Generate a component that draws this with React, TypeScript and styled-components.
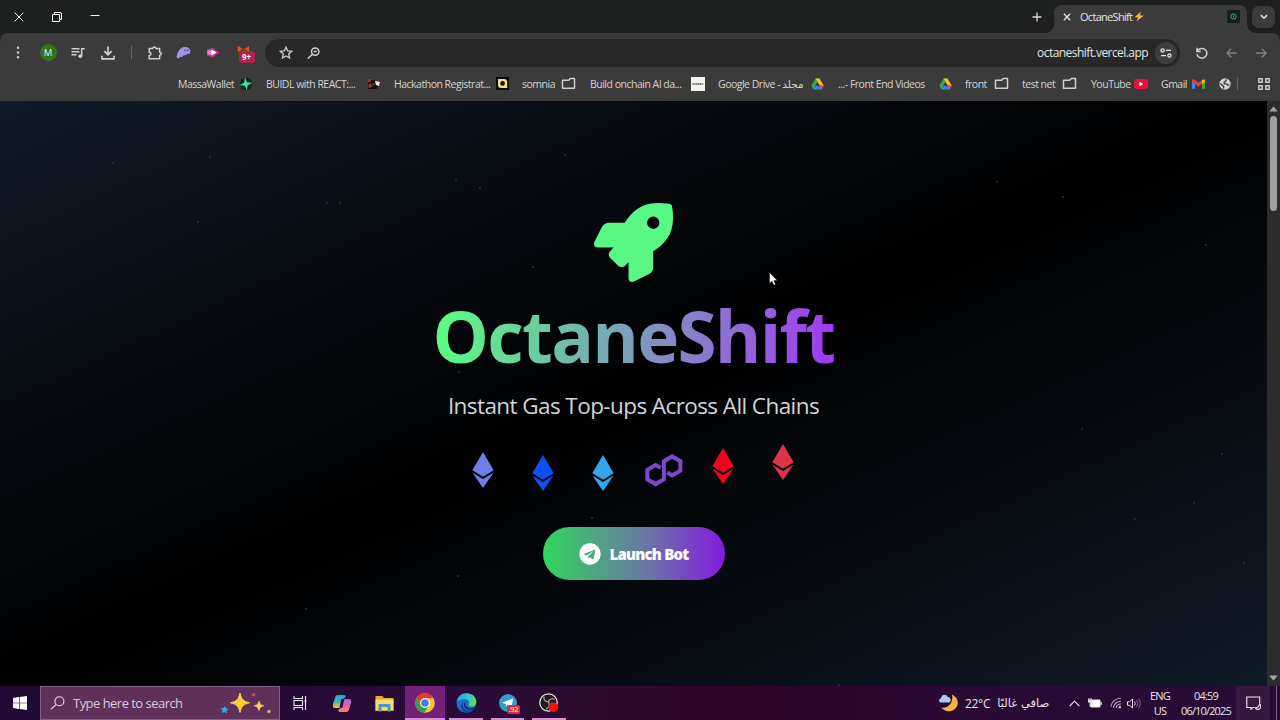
import React from "react";
import styled, { createGlobalStyle, css } from "styled-components";
import { FaRocket, FaEthereum, FaTelegram } from "react-icons/fa";

const GlobalStyle = createGlobalStyle`
  * { box-sizing: border-box; }
  body {
    margin: 0;
    overflow: hidden;
    background: #000;
    font-family: "Open Sans", "Noto Sans", "DejaVu Sans", sans-serif;
  }
  svg { display: block; flex: none; }
`;

const Screen = styled.div`
  width: 1280px;
  height: 720px;
  display: flex;
  flex-direction: column;
`;

/* ---------- Browser chrome ---------- */

const TabStrip = styled.div`
  height: 33px;
  flex: none;
  display: flex;
  align-items: center;
  background: #1d201f;
`;

const WindowButton = styled.div<{ $width: number }>`
  width: ${(p) => p.$width}px;
  display: flex;
  justify-content: center;
`;

const NewTab = styled.div`
  margin-left: auto;
  width: 34px;
  display: flex;
  justify-content: center;
`;

const Tab = styled.div`
  position: relative;
  align-self: flex-end;
  width: 193px;
  height: 28px;
  padding: 0 7px 5px 9px;
  display: flex;
  align-items: center;
  border-radius: 8px 8px 0 0;
  background: #3b3b3b;

  &::before,
  &::after {
    content: "";
    position: absolute;
    bottom: 0;
    width: 8px;
    height: 8px;
  }
  &::before {
    left: -8px;
    background: radial-gradient(circle at 0 0, transparent 7.5px, #3b3b3b 8px);
  }
  &::after {
    right: -8px;
    background: radial-gradient(circle at 100% 0, transparent 7.5px, #3b3b3b 8px);
  }
`;

const TabTitle = styled.span`
  margin-left: 9px;
  font-size: 11px;
  letter-spacing: -0.7px;
  color: #e6e6e6;
  display: flex;
  align-items: center;
  gap: 2px;
`;

const Favicon = styled.div`
  margin-left: auto;
  width: 13px;
  height: 13px;
  display: flex;
  align-items: center;
  justify-content: center;
  background: #14201d;
`;

const TabSearch = styled.div`
  width: 23px;
  height: 22px;
  margin: 0 5px;
  display: flex;
  align-items: center;
  justify-content: center;
  border-radius: 7px;
  background: #3b3b3b;
`;

const Toolbar = styled.div`
  height: 39px;
  flex: none;
  display: flex;
  align-items: center;
  background: #3b3b3b;
  border-radius: 8px 8px 0 0;
`;

const ToolbarBack = styled.div`
  flex: none;
  background: #1d201f;
`;

const ToolCell = styled.div<{ $width: number }>`
  width: ${(p) => p.$width}px;
  flex: none;
  display: flex;
  align-items: center;
  justify-content: center;
`;

const Avatar = styled.div`
  width: 17px;
  height: 17px;
  border-radius: 50%;
  background: #33741c;
  color: #e8f0e4;
  font-size: 9.5px;
  line-height: 17px;
  text-align: center;
`;

const Divider = styled.div`
  width: 1px;
  height: 13px;
  background: #666;
`;

const FoxCell = styled.div`
  position: relative;
  width: 18px;
  height: 18px;
`;

const CountBadge = styled.span`
  position: absolute;
  left: 3px;
  top: 7px;
  width: 16px;
  height: 12px;
  border-radius: 3px;
  background: #b3224f;
  color: #fff;
  font-size: 8px;
  font-weight: 700;
  line-height: 12px;
  text-align: center;
`;

const AddressBar = styled.div`
  width: 915px;
  height: 28px;
  flex: none;
  display: flex;
  align-items: center;
  padding: 0 3px 0 14px;
  border-radius: 14px;
  background: #282828;
`;

const Url = styled.span`
  margin-left: auto;
  margin-right: 7px;
  font-size: 12px;
  letter-spacing: -0.56px;
  color: #e4e4e4;
`;

const SiteInfo = styled.div`
  width: 22px;
  height: 22px;
  border-radius: 50%;
  display: flex;
  align-items: center;
  justify-content: center;
  background: #3d3d3d;
`;

const Bookmarks = styled.div`
  height: 29px;
  flex: none;
  display: flex;
  align-items: center;
  gap: 12px;
  padding: 0 0 6px 178px;
  background: #3b3b3b;
`;

const Bookmark = styled.div<{ $width: number; $inset?: number }>`
  width: ${(p) => p.$width}px;
  padding-right: ${(p) => p.$inset ?? 0}px;
  flex: none;
  display: flex;
  align-items: center;
  justify-content: space-between;
`;

const BookmarkText = styled.span`
  font-size: 10.5px;
  line-height: 16px;
  letter-spacing: -0.5px;
  white-space: pre;
  color: #d4d4d4;
`;

const BookmarkIcon = styled.div`
  width: 16px;
  display: flex;
  justify-content: center;
`;

const BookmarkTail = styled.div`
  display: flex;
  align-items: center;
`;

/* ---------- Page ---------- */

const Viewport = styled.div`
  flex: 1;
  display: flex;
  min-height: 0;
`;

const Hero = styled.main`
  position: relative;
  flex: 1;
  display: flex;
  flex-direction: column;
  align-items: center;
  padding-top: 102px;
  background: linear-gradient(to bottom right, #111a27 0%, #000 50%, #111a27 100%);
`;

const Rocket = styled(FaRocket)`
  margin-right: 1px;
  font-size: 79px;
  color: #59f884;
`;

const Title = styled.h1`
  margin: 17px 0 0;
  font-size: 71px;
  font-weight: 700;
  line-height: 73px;
  letter-spacing: -1.75px;
  background: linear-gradient(97deg, #5bf885 4%, #a03cf2 98%);
  -webkit-background-clip: text;
  background-clip: text;
  color: transparent;
`;

const Tagline = styled.p`
  margin: 18px 0 0;
  font-size: 22.5px;
  line-height: 32px;
  letter-spacing: -0.58px;
  color: #d1d5db;
`;

const Chains = styled.div`
  display: flex;
  gap: 24px;
  margin: 30px 1px 0 0;
`;

const Chain = styled.div<{ $color: string; $lift: number }>`
  width: 36px;
  height: 36px;
  font-size: 36px;
  color: ${(p) => p.$color};
  transform: translateY(${(p) => -p.$lift}px);
`;

const LaunchButton = styled.button`
  width: 182px;
  height: 53px;
  margin-top: 39px;
  padding: 0;
  display: flex;
  align-items: center;
  justify-content: center;
  gap: 9px;
  border: 0;
  border-radius: 27px;
  background: linear-gradient(to right, #30d65c, #6c74a8 58%, #841bdd);
  color: #fff;
  font-family: inherit;
  font-size: 15px;
  font-weight: 800;
  letter-spacing: -0.8px;
`;

const Particle = styled.i<{ $x: number; $y: number }>`
  position: absolute;
  left: ${(p) => p.$x}px;
  top: ${(p) => p.$y}px;
  width: 2px;
  height: 2px;
  border-radius: 50%;
  background: #2b3238;
`;

const Cursor = styled.div`
  position: absolute;
  left: 769px;
  top: 171px;
`;

const Scrollbar = styled.div`
  width: 13px;
  display: flex;
  flex-direction: column;
  align-items: center;
  padding: 5px 0;
  background: #2c2c2c;
`;

const Thumb = styled.div`
  width: 7px;
  height: 95px;
  margin: 4px 0 auto;
  border-radius: 4px;
  background: #9f9f9f;
`;

/* ---------- Taskbar ---------- */

const Taskbar = styled.div`
  height: 34px;
  flex: none;
  display: flex;
  background: linear-gradient(to right, #200a34 0, #2a0b38 35%, #2d0a2c 48%, #2c0529 58%, #2a0a35 78%, #280b35 100%);
`;

const StartButton = styled.div`
  width: 40px;
  display: flex;
  align-items: center;
  justify-content: center;
`;

const SearchBox = styled.div`
  width: 240px;
  display: flex;
  align-items: center;
  padding: 0 7px 0 9px;
  border: 1px solid #85608a;
  background: #5e305a;
  color: #dccada;
  font-size: 13px;
  letter-spacing: -0.53px;

  span {
    margin: 0 auto 0 8px;
  }
`;

const TaskItem = styled.div<{ $width: number; $active?: boolean; $open?: boolean }>`
  position: relative;
  width: ${(p) => p.$width}px;
  display: flex;
  align-items: center;
  justify-content: center;
  ${(p) => p.$active && css`background: #74207a;`}
  ${(p) =>
    p.$open &&
    css`
      &::after {
        content: "";
        position: absolute;
        left: ${p.$active ? 0 : 4}px;
        right: ${p.$active ? 0 : 4}px;
        bottom: 0;
        height: 2px;
        background: #d98fd6;
      }
    `}
`;

const UnreadBadge = styled.span`
  position: absolute;
  left: 20px;
  top: 19px;
  width: 13px;
  height: 9px;
  border-radius: 2px;
  background: #d3303c;
  color: #fff;
  font-size: 7.5px;
  line-height: 9px;
  letter-spacing: -0.3px;
  text-align: center;
`;

const Tray = styled.div`
  margin-left: auto;
  display: flex;
  align-items: center;
  color: #e9e2ec;
  font-size: 12px;
`;

const Weather = styled.div`
  display: flex;
  align-items: center;
  width: 129px;
  white-space: nowrap;
`;

const Temperature = styled.span`
  margin: 0 7px 0 6px;
  letter-spacing: -0.3px;
`;

const Condition = styled.span`
  font-family: "DejaVu Sans", sans-serif;
  font-size: 11.5px;
`;

const Stack = styled.div<{ $width: number; $tracking: number }>`
  width: ${(p) => p.$width}px;
  font-size: 11px;
  line-height: 15px;
  letter-spacing: ${(p) => p.$tracking}px;
  text-align: center;
`;

const Notifications = styled.div`
  width: 34px;
  height: 34px;
  margin-right: 6px;
  display: flex;
  align-items: center;
  justify-content: center;
  background: #391840;
`;

const ShowDesktop = styled.div`
  width: 4px;
  height: 34px;
  border-left: 1px solid #7c6480;
`;

/* ---------- Icons ---------- */

const line = { fill: "none", stroke: "#d0d0d0", strokeWidth: 1.5 };

const FolderIcon = () => (
  <svg width="15" height="13" viewBox="0 0 15 13" {...line}>
    <path d="M1.5 3.2h6.2l1.6-1.7h4.2v9.7h-12z" strokeLinejoin="round" />
  </svg>
);

const DriveIcon = () => (
  <svg width="13" height="12" viewBox="0 0 13 12">
    <path d="M4.5 0.5h4L4.4 7.3 2.2 11 0.2 7.8z" fill="#2fa84f" />
    <path d="M4.5 0.5h4l4.3 7.3H8.8z" fill="#f7bf2a" />
    <path d="M4.2 7.8h8.6L10.8 11.4H2.2z" fill="#3f7ee8" />
    <path d="M8.8 7.8h4l-2 3.6z" fill="#e24a3b" />
  </svg>
);

const MassaIcon = () => (
  <svg width="14" height="14" viewBox="0 0 14 14">
    <circle cx="7" cy="7" r="6.3" fill="#10241f" />
    <path d="M6 0.5l2 4.8 5.5 0.6-4.8 2.3-0.8 5.3-2-4.8L0.5 8l4.7-2.2z" fill="#3ee89a" />
  </svg>
);

const BuidlIcon = () => (
  <svg width="14" height="12" viewBox="0 0 14 12">
    <path d="M1 2h7l1 5-2 4H1z" fill="#170f10" />
    <path d="M1 1h3v3H1zM1 7l3-2 1 4-3 1z" fill="#8e3a34" />
    <path d="M5 5h3v3H5z" fill="#4a2524" />
    <path d="M8 3l5 1-1 4-3-1z" fill="#eee9e2" />
    <path d="M8 7l3 1-1 3H7z" fill="#111" />
  </svg>
);

const HackathonIcon = () => (
  <svg width="13" height="13" viewBox="0 0 13 13">
    <path d="M0 0h13v13H0z" fill="#0b0a06" />
    <path d="M2 2h6.5a3 3 0 0 1 2.7 3v6H5a3 3 0 0 1-3-3z" fill="#f0e37c" />
    <circle cx="6.6" cy="6.4" r="2.3" fill="#0b0a06" />
  </svg>
);

const OnchainIcon = () => (
  <svg width="14" height="14" viewBox="0 0 14 14">
    <path d="M0 0h14v14H0z" fill="#f2f2ee" />
    <path d="M1.5 7h11" stroke="#4a4a4a" strokeWidth="1.6" strokeDasharray="1.3 0.5" />
  </svg>
);

const YouTubeIcon = () => (
  <svg width="14" height="10" viewBox="0 0 14 10">
    <rect width="14" height="10" rx="2.4" fill="#e8123c" />
    <path d="M5.5 2.8v4.4L9.2 5z" fill="#fff" />
  </svg>
);

const GmailIcon = () => (
  <svg width="13" height="10" viewBox="0 0 13 10">
    <path d="M0 1.5v8.3h3V4z" fill="#4285f4" />
    <path d="M13 1.5v8.3h-3V4z" fill="#34a853" />
    <path d="M0 1.5C0 0 1.6 0 2.6 0.7L6.5 3.8 10.4 0.7v3.8L6.5 7.6 2.8 4.7 0 2.9z" fill="#e94235" />
    <path d="M10 1c1-1 3-0.8 3 0.7v1.4L10 5z" fill="#fbbc04" />
  </svg>
);

const GlobeIcon = () => (
  <svg width="12" height="12" viewBox="0 0 12 12">
    <circle cx="6" cy="6" r="5.7" fill="#d4d4d4" />
    <path d="M7 1.2v1.6L5.2 4v1.8h2.4l1 1.3h2M1.2 5.4l3.4 3v2.3" fill="none" stroke="#3b3b3b" strokeWidth="1.3" />
  </svg>
);

const GridIcon = () => (
  <svg width="12" height="12" viewBox="0 0 12 12" {...line} strokeWidth="1.4">
    <path d="M0.8 0.8h3.4v3.4H0.8zM7.8 0.8h3.4v3.4H7.8zM0.8 7.8h3.4v3.4H0.8zM7.8 7.8h3.4v3.4H7.8z" />
  </svg>
);

const PolygonIcon = () => (
  <svg width="38" height="34" viewBox="0 0 38 34">
    <path
      d="M15.6 13.8L10.6 11 2.3 15.9v9.4l8.3 4.8 8.3-4.8V7.2l8.2-4.8 8.3 4.8v9.4l-8.3 4.8-4.8-2.8"
      fill="none"
      stroke="#7c48d0"
      strokeWidth="4"
    />
  </svg>
);

const bookmarks: {
  label: string;
  width: number;
  icon: React.ReactNode;
  inset?: number;
}[] = [
  { label: "MassaWallet", width: 76, icon: <MassaIcon /> },
  { label: "BUIDL with REACT:...", width: 116, icon: <BuidlIcon /> },
  { label: "Hackathon Registrat...", width: 116, icon: <HackathonIcon /> },
  { label: "somnia", width: 56, icon: <FolderIcon />, inset: 2 },
  { label: "Build onchain AI da...", width: 116, icon: <OnchainIcon /> },
  { label: "Google Drive - مجلد", width: 108, icon: <DriveIcon />, inset: 1 },
  { label: "...- Front End Videos", width: 115, icon: <DriveIcon /> },
  { label: "front", width: 45, icon: <FolderIcon />, inset: 1 },
  { label: "test net", width: 57, icon: <FolderIcon />, inset: 2 },
  { label: "YouTube", width: 58, icon: <YouTubeIcon /> },
  { label: "Gmail", width: 45, icon: <GmailIcon /> },
];

const chains = [
  { color: "#6c7fe6", lift: 0 },
  { color: "#0d4ff5", lift: -3 },
  { color: "#35a6ee", lift: -3 },
  { color: "#7c48d0", lift: -2, polygon: true },
  { color: "#f5001f", lift: 4 },
  { color: "#db3546", lift: 8 },
];

const particles = [
  [112, 61], [209, 55], [197, 120], [326, 101], [339, 101], [455, 78], [479, 86],
  [564, 53], [532, 165], [458, 270], [591, 416], [457, 474], [305, 507], [996, 80],
  [1062, 95], [1205, 143], [1081, 327], [1221, 352], [1193, 401], [1134, 417], [1243, 461],
  [838, 583],
];

const Browser: React.FunctionComponent = () => (
  <>
    <TabStrip>
      <WindowButton $width={38}>
        <svg width="10" height="10" viewBox="0 0 10 10" stroke="#fff">
          <path d="M0.7 0.7l8.6 8.6M9.3 0.7L0.7 9.3" />
        </svg>
      </WindowButton>
      <WindowButton $width={37}>
        <svg width="10" height="10" viewBox="0 0 10 10" fill="none" stroke="#fff">
          <path d="M0.5 2.5h7v7h-7zM2.5 2V0.5h5.5q1.5 0 1.5 1.5v5.5H8" />
        </svg>
      </WindowButton>
      <WindowButton $width={40}>
        <svg width="10" height="10" viewBox="0 0 10 10" stroke="#fff">
          <path d="M0.5 3.5h9" />
        </svg>
      </WindowButton>
      <NewTab>
        <svg width="10" height="10" viewBox="0 0 10 10" stroke="#dcdcdc" strokeWidth="1.3">
          <path d="M5 0.5v9M0.5 5h9" />
        </svg>
      </NewTab>
      <Tab>
        <svg width="8" height="8" viewBox="0 0 8 8" stroke="#e6e6e6" strokeWidth="1.4">
          <path d="M0.8 0.8l6.4 6.4M7.2 0.8L0.8 7.2" />
        </svg>
        <TabTitle>
          OctaneShift
          <svg width="10" height="11" viewBox="0 0 10 11">
            <path d="M7 0.5L0.5 6.2l3.7 0.4L2.4 10.6 9.6 4.7 5.8 4.2z" fill="#f8b82e" />
          </svg>
        </TabTitle>
        <Favicon>
          <svg width="7" height="7" viewBox="0 0 7 7" fill="none" stroke="#5f9f8c">
            <circle cx="3.5" cy="3.5" r="2.6" />
            <path d="M3.5 2.4v2" />
          </svg>
        </Favicon>
      </Tab>
      <TabSearch>
        <svg width="8" height="6" viewBox="0 0 8 6" fill="none" stroke="#eee" strokeWidth="1.6">
          <path d="M1 1.2l3 3 3-3" />
        </svg>
      </TabSearch>
    </TabStrip>

    <ToolbarBack>
      <Toolbar>
        <ToolCell $width={36}>
          <svg width="4" height="13" viewBox="0 0 4 13" fill="#cfcfcf">
            <circle cx="2" cy="1.8" r="1.25" />
            <circle cx="2" cy="6.5" r="1.25" />
            <circle cx="2" cy="11.2" r="1.25" />
          </svg>
        </ToolCell>
        <ToolCell $width={24}>
          <Avatar>M</Avatar>
        </ToolCell>
        <ToolCell $width={36}>
          <svg width="14" height="12" viewBox="0 0 14 12" {...line}>
            <path d="M0.5 1.7h8M0.5 4.7h8M0.5 7.7h5M10.7 9V1.7h3" />
            <circle cx="9.3" cy="9.2" r="1.5" fill="#d0d0d0" strokeWidth="1" />
          </svg>
        </ToolCell>
        <ToolCell $width={24}>
          <svg width="14" height="14" viewBox="0 0 14 14" {...line} strokeWidth="1.7">
            <path d="M7 0.5v8M3.3 5.2L7 8.9l3.7-3.7M1 9.8v3h12v-3" />
          </svg>
        </ToolCell>
        <ToolCell $width={22}>
          <Divider />
        </ToolCell>
        <ToolCell $width={25}>
          <svg width="14" height="14" viewBox="0 0 14 14" {...line}>
            <path
              d="M1.2 2.6h3.6c0-2.2 3-2.2 3 0h3.8v3.6c2.2 0 2.2 3 0 3v3.6H1.2V9.4c2.4 0 2.4-3.2 0-3.2z"
              strokeLinejoin="round"
            />
          </svg>
        </ToolCell>
        <ToolCell $width={33}>
          <svg width="15" height="13" viewBox="0 0 15 13">
            <path
              d="M0.5 11C1.5 5.5 4.5 1 9 1c4 0 6 2.6 5.2 5.5-0.5 2-2.4 1.8-3 1-0.8 2-2.6 2.2-3.4 1.4C6.8 11 5.4 11.4 4.4 10.4 3.2 12.4 1 12.8 0.5 11z"
              fill="#a493ee"
            />
            <path d="M9 3.4v1.6M11.6 3.4v1.6" stroke="#3b3b3b" strokeWidth="1.1" />
          </svg>
        </ToolCell>
        <ToolCell $width={26}>
          <svg width="14" height="11" viewBox="0 0 14 11">
            <path d="M1 2.5L6.5 0.8 13.5 5.5 6.5 10.2 1 8.5z" fill="#c2368f" />
            <path d="M1.5 3.5h5v4h-5z" fill="#e88fcb" />
            <path d="M5.5 2.5l5 3-5 3z" fill="#fff" />
          </svg>
        </ToolCell>
        <ToolCell $width={37}>
          <FoxCell>
            <svg width="16" height="16" viewBox="0 0 16 16">
              <path d="M2 2l4 2h3l4-2 1 4-1 6H3L1 6z" fill="#7a3a1c" />
              <path d="M2 2l4 3-4 3zM13 2L9 5l4 3z" fill="#dd5a20" />
            </svg>
            <CountBadge>9+</CountBadge>
          </FoxCell>
        </ToolCell>
        <ToolCell $width={2} />
        <AddressBar>
          <svg width="14" height="13" viewBox="0 0 14 13" {...line} strokeWidth="1.3">
            <path d="M7 1.2l1.7 3.7 4 0.4-3 2.7 0.9 4L7 9.9 3.4 12l0.9-4-3-2.7 4-0.4z" />
          </svg>
          <ToolCell $width={40}>
            <svg width="13" height="12" viewBox="0 0 13 12" {...line}>
              <circle cx="8.2" cy="4.6" r="3.7" />
              <path d="M5.5 7.2L0.8 11.5M6.6 4.6h3.2" />
            </svg>
          </ToolCell>
          <Url>octaneshift.vercel.app</Url>
          <SiteInfo>
            <svg width="12" height="10" viewBox="0 0 12 10" {...line} stroke="#e4e4e4" strokeWidth="1.3">
              <circle cx="2.6" cy="2.4" r="1.6" />
              <circle cx="9.4" cy="7.6" r="1.6" />
              <path d="M6 2.4h5M1 7.6h5" />
            </svg>
          </SiteInfo>
        </AddressBar>
        <ToolCell $width={43}>
          <svg width="12" height="12" viewBox="0 0 12 12" {...line}>
            <path d="M1 0.8v3.6h3.8M1.4 4.2a5 4.8 0 1 1-0.4 3" />
          </svg>
        </ToolCell>
        <ToolCell $width={17}>
          <svg width="11" height="10" viewBox="0 0 11 10" {...line} stroke="#858585" strokeWidth="1.3">
            <path d="M10.7 5H1M5.2 0.7L0.9 5l4.3 4.3" />
          </svg>
        </ToolCell>
        <ToolCell $width={42}>
          <svg width="11" height="10" viewBox="0 0 11 10" {...line} stroke="#858585" strokeWidth="1.3">
            <path d="M0.3 5H10M5.8 0.7L10.1 5 5.8 9.3" />
          </svg>
        </ToolCell>
      </Toolbar>
    </ToolbarBack>

    <Bookmarks>
      {bookmarks.map((b) => (
        <Bookmark key={b.label} $width={b.width} $inset={b.inset}>
          <BookmarkText>{b.label}</BookmarkText>
          <BookmarkIcon>{b.icon}</BookmarkIcon>
        </Bookmark>
      ))}
      <BookmarkTail>
        <ToolCell $width={13}>
          <GlobeIcon />
        </ToolCell>
        <ToolCell $width={13}>
          <Divider />
        </ToolCell>
        <ToolCell $width={39}>
          <GridIcon />
        </ToolCell>
      </BookmarkTail>
    </Bookmarks>
  </>
);

const Landing: React.FunctionComponent = () => (
  <Viewport>
    <Hero>
      {particles.map(([x, y]) => (
        <Particle key={`${x}-${y}`} $x={x} $y={y} />
      ))}
      <Rocket />
      <Title>OctaneShift</Title>
      <Tagline>Instant Gas Top-ups Across All Chains</Tagline>
      <Chains>
        {chains.map((c) => (
          <Chain key={c.color} $color={c.color} $lift={c.lift}>
            {c.polygon ? <PolygonIcon /> : <FaEthereum />}
          </Chain>
        ))}
      </Chains>
      <LaunchButton>
        <FaTelegram size={22} />
        Launch Bot
      </LaunchButton>
      <Cursor>
        <svg width="9" height="14" viewBox="0 0 9 14">
          <path d="M0.5 0.5v11l2.5-2.3 1.8 4 1.8-0.8L4.9 8.6h3.4z" fill="#fff" stroke="#111" strokeWidth="0.5" />
        </svg>
      </Cursor>
    </Hero>
    <Scrollbar>
      <svg width="9" height="6" viewBox="0 0 9 6">
        <path d="M4.5 0.5L8.8 5.5H0.2z" fill="#a6a6a6" />
      </svg>
      <Thumb />
      <svg width="9" height="6" viewBox="0 0 9 6">
        <path d="M4.5 5.5L8.8 0.5H0.2z" fill="#a6a6a6" />
      </svg>
    </Scrollbar>
  </Viewport>
);

const WindowsTaskbar: React.FunctionComponent = () => (
  <Taskbar>
    <StartButton>
      <svg width="14" height="14" viewBox="0 0 14 14" fill="#fff">
        <path d="M0 2l6-0.9v5.6H0zM6.6 1L14 0v6.7H6.6zM0 7.3h6v5.6L0 12zM6.6 7.3H14V14l-7.4-1z" />
      </svg>
    </StartButton>
    <SearchBox>
      <svg width="15" height="14" viewBox="0 0 15 14" fill="none" stroke="#eadcea" strokeWidth="1.1">
        <circle cx="9.4" cy="5.2" r="4.5" />
        <path d="M6.1 8.5L0.8 13.4" />
      </svg>
      <span>Type here to search</span>
      <svg width="52" height="23" viewBox="0 0 52 23">
        <path d="M20 1c1.6 6.6 3 8 9.5 9.8C23 12.6 21.6 14 20 20.5c-1.6-6.5-3-7.9-9.5-9.7C17 9 18.4 7.6 20 1z" fill="#fbcf3c" stroke="#fbcf3c" strokeLinejoin="round" />
        <path d="M39 9c0.9 3.2 1.7 4 4.8 4.8-3.1 0.9-3.9 1.7-4.8 4.8-0.9-3.1-1.7-3.9-4.8-4.8C37.3 13 38.1 12.2 39 9z" fill="#fbd35a" stroke="#fbd35a" strokeWidth="0.7" />
        <path d="M5 14l1 2.4 2.8 0.6-2.2 1.6 0.2 2.8-2.4-1.3L1.7 21l0.8-2.7L0.6 16.2l2.8-0.1z" fill="#3ba9e0" />
        <circle cx="33.5" cy="2.8" r="1.8" fill="#c84c3c" />
        <circle cx="49" cy="19.5" r="1.8" fill="#b8b75a" />
      </svg>
    </SearchBox>
    <TaskItem $width={40}>
      <svg width="14" height="14" viewBox="0 0 14 14" fill="none" stroke="#f0e8f2" strokeWidth="1.1">
        <path d="M1 0v2.5h8.5V0M1 14v-2.5h8.5V14M1 4.5h8.5v5H1zM12.5 0v14M11.3 5h2.4" />
      </svg>
    </TaskItem>
    <TaskItem $width={44}>
      <svg width="20" height="19" viewBox="0 0 20 19">
        <defs>
          <linearGradient id="copilotLeft" x1="0" y1="0" x2="0" y2="1">
            <stop offset="0" stopColor="#2f9cf0" />
            <stop offset="0.5" stopColor="#3fb79a" />
            <stop offset="1" stopColor="#f2c53e" />
          </linearGradient>
          <linearGradient id="copilotRight" x1="0" y1="0" x2="0" y2="1">
            <stop offset="0" stopColor="#9a6af0" />
            <stop offset="0.5" stopColor="#ea5fa0" />
            <stop offset="1" stopColor="#f48a5c" />
          </linearGradient>
        </defs>
        <path d="M5.5 1H12q2 0 1.7 2L11 5 8.5 14H3Q0 14 1 10l2.2-7Q3.8 1 5.5 1z" fill="url(#copilotLeft)" />
        <path d="M14.5 18H8q-2 0-1.5-2L9 13.5 11.5 5H17q3 0 2 4l-2.2 7q-0.6 2-2.3 2z" fill="url(#copilotRight)" />
        <path d="M9.4 5h3l-2 8.8H7.4z" fill="#2a1244" />
      </svg>
    </TaskItem>
    <TaskItem $width={41}>
      <svg width="19" height="17" viewBox="0 0 19 17">
        <path d="M0.5 1h7l1.5 2h9.5v13h-18z" fill="#e3aa2e" />
        <path d="M0.5 4.5h18V15h-18z" fill="#fbdc74" />
        <path d="M3.5 9h12v7.5h-3V12h-6v4.5h-3z" fill="#4a9cc4" />
      </svg>
    </TaskItem>
    <TaskItem $width={40} $active $open>
      <svg width="20" height="20" viewBox="0 0 20 20">
        <circle cx="10" cy="10" r="9.8" fill="#f7c72e" />
        <path d="M1.5 5.1A9.8 9.8 0 0 1 18.5 5.2H10L5.9 12.4z" fill="#e33b2e" />
        <path d="M1.5 5.1A9.8 9.8 0 0 0 9.2 19.8L14.2 12.4 5.9 12.4z" fill="#2ba24c" />
        <circle cx="10" cy="10" r="4.9" fill="#fff" />
        <circle cx="10" cy="10" r="3.8" fill="#3c7fe8" />
      </svg>
    </TaskItem>
    <TaskItem $width={42} $open>
      <svg width="21" height="20" viewBox="0 0 21 20">
        <defs>
          <linearGradient id="edgeTop" x1="0" y1="0" x2="1" y2="0.3">
            <stop offset="0" stopColor="#2a9fe0" />
            <stop offset="0.55" stopColor="#2fc0d8" />
            <stop offset="1" stopColor="#5cd86a" />
          </linearGradient>
        </defs>
        <circle cx="10.3" cy="10" r="9.8" fill="#1a6fc8" />
        <path d="M0.6 9C1.4 3.6 5.6 0.2 10.6 0.2c6 0 9.8 4.4 9.8 8.6 0 3.2-2.4 4.8-5 4.8-2.2 0-3.2-0.8-2.8-1.8 1.6-2.8-0.4-5.8-4-5.8C5 6 1.6 7.4 0.6 9z" fill="url(#edgeTop)" />
        <path d="M8 8.8c-2.6 4 0.6 9 5.4 8.6 2.4-0.2 4.4-1.4 5.4-2.4C16 20 9.6 21 6.4 17.4 4 14.6 4.8 10.6 8 8.8z" fill="#124a94" />
        <path d="M10 8.8c-1.8 1.6-1 5.6 3 6.6 2 0.4 4 0 6.4-1.6l-1.2 2c-4 1.8-8.6 0.6-9.8-2.6-0.8-2 0-4 1.6-4.4z" fill="#24123a" />
      </svg>
    </TaskItem>
    <TaskItem $width={41} $open>
      <svg width="18" height="18" viewBox="0 0 18 18">
        <circle cx="9" cy="9" r="9" fill="#2f9fd0" />
        <path d="M3 8.8L14.2 4.3 12.4 13.6 8.6 11 7 12.6 6.8 10z" fill="#fff" />
      </svg>
      <UnreadBadge>.92</UnreadBadge>
    </TaskItem>
    <TaskItem $width={42} $open>
      <svg width="20" height="20" viewBox="0 0 20 20">
        <circle cx="9.5" cy="9.5" r="8.7" fill="#1c1a1e" stroke="#eee" strokeWidth="1.2" />
        <path d="M5 3.6c-0.6 3.6 1.8 5.6 4.6 5.4M15.6 6.4c-3-1.6-6 0.2-6 2.6M7 16c3-1.2 4-4 2.6-7" fill="none" stroke="#bbb" strokeWidth="1.1" />
        <circle cx="14.3" cy="14.2" r="4.8" fill="#fb0d12" />
      </svg>
    </TaskItem>

    <Tray>
      <Weather>
        <svg width="21" height="20" viewBox="0 0 21 20">
          <path d="M14 1.5c6 3 7.5 9 3.8 13.5C14 19.4 7 19.4 3.2 14.6 11 15.4 15.6 9 14 1.5z" fill="#f6b342" />
          <path d="M3.4 9.6C0.6 9.6 0.2 5.8 3 5.2 3.4 1.4 8.4 0.6 9.8 4c3.4-0.4 4.2 5.6 0.6 5.6z" fill="#a9c8f2" />
        </svg>
        <Temperature>22°C</Temperature>
        <Condition dir="rtl">صافي غالبًا</Condition>
      </Weather>
      <ToolCell $width={15}>
        <svg width="11" height="7" viewBox="0 0 11 7" fill="none" stroke="#e9e2ec" strokeWidth="1.1">
          <path d="M0.7 6l4.8-4.8L10.3 6" />
        </svg>
      </ToolCell>
      <ToolCell $width={25}>
        <svg width="14" height="10" viewBox="0 0 14 10">
          <path d="M3 2h9v7H3z" fill="#fff" stroke="#e9e2ec" />
          <path d="M12.5 4h1.3v3h-1.3zM0 1.5h4v3H2.8V9H1.6V4.5H0zM0.4 0h1v2h-1zM2.6 0h1v2h-1z" fill="#e9e2ec" />
        </svg>
      </ToolCell>
      <ToolCell $width={17}>
        <svg width="12" height="12" viewBox="0 0 12 12" fill="none" stroke="#b9a9c0" strokeWidth="1.1">
          <path d="M0.8 10A10 10 0 0 1 11 1.2M3.4 10.8A7.4 7.4 0 0 1 11 4.2M6 11.2A5 5 0 0 1 11 7" />
          <circle cx="9.8" cy="10.2" r="0.8" fill="#fff" />
        </svg>
      </ToolCell>
      <ToolCell $width={20}>
        <svg width="14" height="11" viewBox="0 0 14 11" fill="none" stroke="#e9e2ec">
          <path d="M0.5 3.7h2L5.5 1v9L2.5 7.3h-2zM7.5 3.6q1.4 1.9 0 3.8" />
          <path d="M9.5 2.2q2.4 3.3 0 6.6M11.6 0.8q3.2 4.7 0 9.4" stroke="#836f8b" />
        </svg>
      </ToolCell>
      <Stack $width={32} $tracking={-0.8}>
        ENG
        <br />
        US
      </Stack>
      <Stack $width={60} $tracking={-0.85}>
        04:59
        <br />
        06/10/2025
      </Stack>
      <Notifications>
        <svg width="15" height="14" viewBox="0 0 15 14" fill="none" stroke="#f0e8f2" strokeWidth="1.1">
          <path d="M8 11.5H6.8L5 13.2v-1.7H0.8V1h12.9v6" />
          <path d="M13.5 8a3 3 0 1 1-4.4 3.8c2 0.4 4-1.2 4.4-3.8z" />
        </svg>
      </Notifications>
      <ShowDesktop />
    </Tray>
  </Taskbar>
);

const App: React.FunctionComponent = () => (
  <Screen>
    <GlobalStyle />
    <Browser />
    <Landing />
    <WindowsTaskbar />
  </Screen>
);

export default App;
